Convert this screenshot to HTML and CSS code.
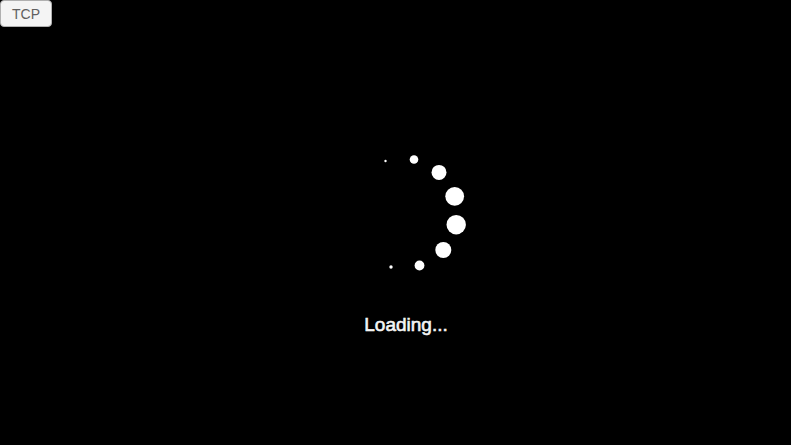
FILE: index.html
```html
<!DOCTYPE html>
<html lang="en">
<head>
<meta charset="utf-8">
<title>Loading</title>
<link rel="stylesheet" href="styles.css">
</head>
<body>
<button class="protocol">TCP</button>
<main class="loader">
<svg class="spinner" width="120" height="120" viewBox="350 153 120 120" aria-hidden="true">
<circle cx="385.5" cy="161" r="1.2"/>
<circle cx="414" cy="159.5" r="4.3"/>
<circle cx="439" cy="172.4" r="7.5"/>
<circle cx="454.7" cy="196.3" r="9.4"/>
<circle cx="456.2" cy="224.7" r="9.7"/>
<circle cx="443.3" cy="250" r="8"/>
<circle cx="419.5" cy="265.5" r="4.9"/>
<circle cx="391" cy="267" r="1.7"/>
</svg>
<p class="label">Loading...</p>
</main>
</body>
</html>
```
FILE: styles.css
```css
* { box-sizing: border-box; }
body {
  margin: 0;
  height: 445px;
  overflow: hidden;
  background: #000;
  font-family: "Liberation Sans", Arial, sans-serif;
}
.protocol {
  display: block;
  width: 52px;
  height: 27px;
  padding: 1px 0 0;
  border: 1px solid #b0b0b0;
  border-radius: 4px;
  background: #f4f4f4;
  color: #606060;
  font: 14px/24px "Liberation Sans", Arial, sans-serif;
}
.loader {
  width: 112px;
  margin: 126px 0 0 350px;
}
.spinner { display: block; fill: #fff; }
.label {
  margin: 40px 0 0;
  color: #f4f4f4;
  font-size: 19px;
  line-height: 24px;
  text-align: center;
  -webkit-text-stroke: 0.6px #f4f4f4;
}
```
